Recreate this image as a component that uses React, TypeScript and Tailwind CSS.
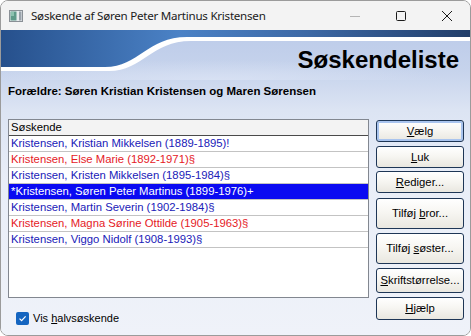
import React from 'react';

type Person = { name: string; color: 'blue' | 'red' | 'sel' };

const siblings: Person[] = [
  { name: 'Kristensen, Kristian Mikkelsen (1889-1895)!', color: 'blue' },
  { name: 'Kristensen, Else Marie (1892-1971)§', color: 'red' },
  { name: 'Kristensen, Kristen Mikkelsen (1895-1984)§', color: 'blue' },
  { name: '*Kristensen, Søren Peter Martinus (1899-1976)+', color: 'sel' },
  { name: 'Kristensen, Martin Severin (1902-1984)§', color: 'blue' },
  { name: 'Kristensen, Magna Sørine Ottilde (1905-1963)§', color: 'red' },
  { name: 'Kristensen, Viggo Nidolf (1908-1993)§', color: 'blue' },
];

function Btn({ pre = '', k, post = '', h, mt, isDefault = false }: { pre?: string; k: string; post?: string; h: string; mt: string; isDefault?: boolean }) {
  return (
    <button
      className={`${h} ${mt} w-[88px] shrink-0 rounded-[3px] border border-[#1e3656] bg-[linear-gradient(180deg,#ffffff_0%,#f7f6f2_45%,#e9e7e0_100%)] text-[11.3px] text-black flex items-center justify-center ${isDefault ? 'shadow-[inset_0_0_0_2px_#a9c4ee]' : ''}`}
    >
      <span>
        {pre}
        <span className="underline underline-offset-[1px]">{k}</span>
        {post}
      </span>
    </button>
  );
}

export default function App() {
  return (
    <div className="w-[471px] h-[336px] bg-white font-['Liberation_Sans',Arial,sans-serif]">
      <div className="w-[471px] h-[336px] rounded-[8px] border border-[#9b9b9b] overflow-hidden flex flex-col">
        {/* Title bar */}
        <div className="h-[29px] shrink-0 bg-[#f3f3f3] flex items-center">
          <svg width="14" height="12" viewBox="0 0 14 12" className="ml-[8px]">
            <rect x="0.5" y="0.5" width="13" height="11" fill="#e8ebee" stroke="#8a9096" />
            <rect x="1.5" y="1.5" width="6" height="9" fill="#5f9a8a" />
            <rect x="2" y="2" width="3" height="4" fill="#8cc2b0" />
            <rect x="10" y="1.5" width="2.5" height="9" fill="#9aa3ab" />
          </svg>
          <span className="ml-[8px] text-[11.6px] text-[#1b1b1b] font-['Noto_Sans',sans-serif] tracking-[-0.25px]">
            Søskende af Søren Peter Martinus Kristensen
          </span>
          <div className="ml-auto flex items-center">
            <div className="w-[46px] h-[29px] flex items-center justify-center">
              <svg width="12" height="12" viewBox="0 0 12 12"><line x1="1" y1="6.5" x2="11" y2="6.5" stroke="#b5b5b5" /></svg>
            </div>
            <div className="w-[46px] h-[29px] flex items-center justify-center">
              <svg width="12" height="12" viewBox="0 0 12 12"><rect x="1.5" y="1.5" width="9" height="9" rx="1" fill="none" stroke="#1b1b1b" /></svg>
            </div>
            <div className="w-[46px] h-[29px] flex items-center justify-center">
              <svg width="12" height="12" viewBox="0 0 12 12"><path d="M1 1 L11 11 M11 1 L1 11" stroke="#1b1b1b" strokeWidth="1" /></svg>
            </div>
          </div>
        </div>

        {/* Client area */}
        <div className="flex-1 flex flex-col bg-[linear-gradient(180deg,#bccbe9_0px,#c6d3ec_40px,#dce4f3_80px,#e9eef8_150px,#eff2f9_100%)]">
          {/* Banner */}
          <div className="relative h-[50px] shrink-0 flex justify-end">
            <svg className="absolute inset-0" width="469" height="50" viewBox="0 0 469 50" preserveAspectRatio="none">
              <defs>
                <linearGradient id="dark" x1="0" y1="0" x2="1" y2="0">
                  <stop offset="0" stopColor="#26508c" />
                  <stop offset="0.38" stopColor="#4b82c6" />
                  <stop offset="0.65" stopColor="#3d69a6" />
                  <stop offset="1" stopColor="#223e6a" />
                </linearGradient>
                <radialGradient id="glow" cx="0.45" cy="1" r="0.5">
                  <stop offset="0" stopColor="#d9e2f4" stopOpacity="0.9" />
                  <stop offset="1" stopColor="#d9e2f4" stopOpacity="0" />
                </radialGradient>
              </defs>
              <rect x="0" y="10" width="469" height="40" fill="url(#glow)" />
              <path d="M0 0 H469 V11 H190 C150 11 142 41 108 41 H0 Z" fill="#ffffff" />
              <path d="M0 0 H469 V7 H186 C146 7 138 37 104 37 H0 Z" fill="url(#dark)" />
            </svg>
            <h1 className="relative pt-[18px] pr-[11px] text-[24px] leading-[24px] font-bold text-black">Søskendeliste</h1>
          </div>

          <div className="mt-[5px] pl-[7px] text-[11.5px] leading-[13px] font-bold text-black">
            Forældre: Søren Kristian Kristensen og Maren Sørensen
          </div>

          <div className="mt-[21px] pl-[7px] flex gap-[7px]">
            <div className="flex flex-col">
              {/* List */}
              <div className="w-[361px] h-[179px] border border-[#828790] bg-white flex flex-col">
                <div className="h-[16px] shrink-0 bg-[#f3f3f3] border-b border-[#4a4a4a] pl-[2px] text-[11.3px] leading-[15px] text-black">
                  Søskende
                </div>
                {siblings.map((p) => (
                  <div
                    key={p.name}
                    className={`h-[16px] shrink-0 border-b border-[#c3c3c3] pl-[2px] text-[11.3px] leading-[15px] whitespace-nowrap ${
                      p.color === 'sel' ? 'bg-[#0a0af2] text-white' : p.color === 'red' ? 'text-[#e5201f]' : 'text-[#2020b8]'
                    }`}
                  >
                    {p.name}
                  </div>
                ))}
              </div>
              {/* Checkbox */}
              <label className="mt-[14px] ml-[8px] flex items-center gap-[4px]">
                <span className="w-[13px] h-[13px] rounded-[2px] bg-[#1565c0] flex items-center justify-center">
                  <svg width="9" height="9" viewBox="0 0 9 9"><path d="M1.5 4.6 L3.6 6.6 L7.6 2.4" fill="none" stroke="#ffffff" strokeWidth="1.2" /></svg>
                </span>
                <span className="text-[11px] leading-[13px] text-black">
                  Vis <span className="underline underline-offset-[1px]">h</span>alvsøskende
                </span>
              </label>
            </div>

            {/* Buttons */}
            <div className="flex flex-col">
              <Btn k="V" post="ælg" h="h-[22px]" mt="mt-[1px]" isDefault />
              <Btn k="L" post="uk" h="h-[22px]" mt="mt-[4px]" />
              <Btn k="R" post="ediger..." h="h-[22px]" mt="mt-[3px]" />
              <Btn pre="Tilføj " k="b" post="ror..." h="h-[31px]" mt="mt-[5px]" />
              <Btn pre="Tilføj " k="s" post="øster..." h="h-[31px]" mt="mt-[4px]" />
              <Btn k="S" post="kriftstørrelse..." h="h-[25px]" mt="mt-[4px]" />
              <Btn k="H" post="jælp" h="h-[23px]" mt="mt-[4px]" />
            </div>
          </div>
        </div>
      </div>
    </div>
  );
}
